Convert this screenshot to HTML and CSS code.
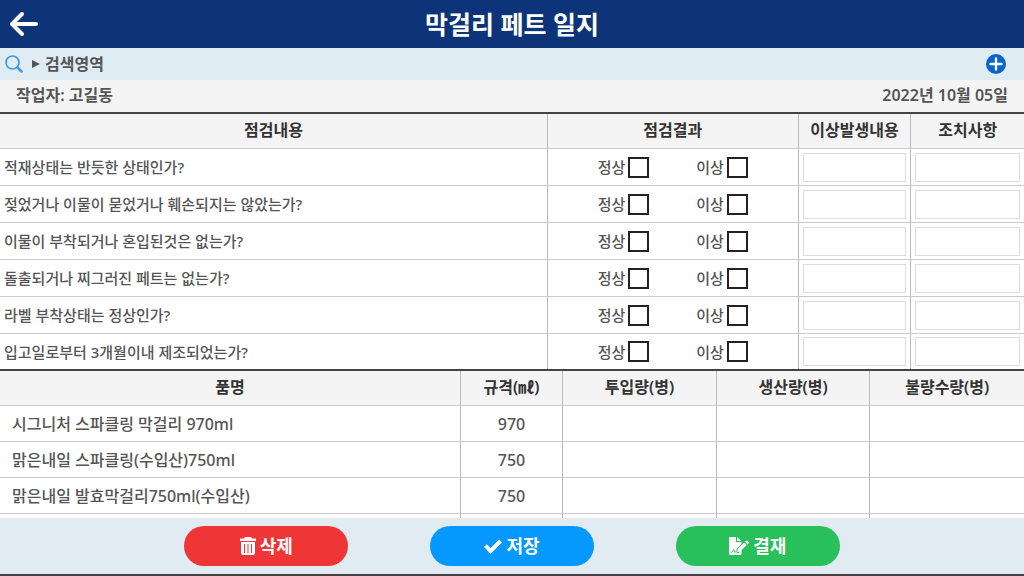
FILE: index.html
```html
<!DOCTYPE html>
<html lang="ko">
<head>
    <meta charset="UTF-8">
    <meta name="viewport" content="width=device-width, initial-scale=1.0">
    <title>막걸리 페트 일지</title>
    <link rel="stylesheet" href="styles.css">
</head>
<body>
    <header class="top-bar">
        <button type="button" class="back" aria-label="뒤로">
            <svg width="30" height="26" viewBox="0 0 30 26" fill="none" stroke="#fff" stroke-width="4" stroke-linecap="round" stroke-linejoin="round">
                <path d="M27 13H3M13 3L3 13l10 10"/>
            </svg>
        </button>
        <h1>막걸리 페트 일지</h1>
    </header>

    <div class="search-bar">
        <svg width="18" height="18" viewBox="0 0 18 18" fill="none" stroke="#3a9ee0">
            <circle cx="7.500" cy="7.500" r="6.500" stroke-width="1.700"/>
            <path d="M12.500 12.500l4 4" stroke-width="2.500" stroke-linecap="round"/>
        </svg>
        <span class="arrow"></span>
        <span>검색영역</span>
        <button type="button" class="add" aria-label="추가">
            <svg width="20" height="20" viewBox="0 0 20 20">
                <circle cx="10" cy="10" r="10" fill="#0864cf"/>
                <path d="M10 4.500v11M4.500 10h11" stroke="#fff" stroke-width="2.400" stroke-linecap="round"/>
            </svg>
        </button>
    </div>

    <div class="info">
        <span>작업자: 고길동</span>
        <span>2022년 10월 05일</span>
    </div>

    <main>
        <table class="check-table">
            <thead>
                <tr>
                    <th class="w-content">점검내용</th>
                    <th class="w-result">점검결과</th>
                    <th class="w-note">이상발생내용</th>
                    <th class="w-note">조치사항</th>
                </tr>
            </thead>
            <tbody>
                <tr>
                    <td>적재상태는 반듯한 상태인가?</td>
                    <td><div class="checks"><label>정상<input type="checkbox"></label><label>이상<input type="checkbox"></label></div></td>
                    <td class="note"><input type="text" aria-label="이상발생내용"></td>
                    <td class="note"><input type="text" aria-label="조치사항"></td>
                </tr>
                <tr>
                    <td>젖었거나 이물이 묻었거나 훼손되지는 않았는가?</td>
                    <td><div class="checks"><label>정상<input type="checkbox"></label><label>이상<input type="checkbox"></label></div></td>
                    <td class="note"><input type="text" aria-label="이상발생내용"></td>
                    <td class="note"><input type="text" aria-label="조치사항"></td>
                </tr>
                <tr>
                    <td>이물이 부착되거나 혼입된것은 없는가?</td>
                    <td><div class="checks"><label>정상<input type="checkbox"></label><label>이상<input type="checkbox"></label></div></td>
                    <td class="note"><input type="text" aria-label="이상발생내용"></td>
                    <td class="note"><input type="text" aria-label="조치사항"></td>
                </tr>
                <tr>
                    <td>돌출되거나 찌그러진 페트는 없는가?</td>
                    <td><div class="checks"><label>정상<input type="checkbox"></label><label>이상<input type="checkbox"></label></div></td>
                    <td class="note"><input type="text" aria-label="이상발생내용"></td>
                    <td class="note"><input type="text" aria-label="조치사항"></td>
                </tr>
                <tr>
                    <td>라벨 부착상태는 정상인가?</td>
                    <td><div class="checks"><label>정상<input type="checkbox"></label><label>이상<input type="checkbox"></label></div></td>
                    <td class="note"><input type="text" aria-label="이상발생내용"></td>
                    <td class="note"><input type="text" aria-label="조치사항"></td>
                </tr>
                <tr>
                    <td>입고일로부터 3개월이내 제조되었는가?</td>
                    <td><div class="checks"><label>정상<input type="checkbox"></label><label>이상<input type="checkbox"></label></div></td>
                    <td class="note"><input type="text" aria-label="이상발생내용"></td>
                    <td class="note"><input type="text" aria-label="조치사항"></td>
                </tr>
            </tbody>
        </table>

        <table class="item-table">
            <thead>
                <tr>
                    <th class="w-name">품명</th>
                    <th class="w-size">규격(㎖)</th>
                    <th>투입량(병)</th>
                    <th>생산량(병)</th>
                    <th>불량수량(병)</th>
                </tr>
            </thead>
            <tbody>
                <tr><td>시그니처 스파클링 막걸리 970ml</td><td>970</td><td></td><td></td><td></td></tr>
                <tr><td>맑은내일 스파클링(수입산)750ml</td><td>750</td><td></td><td></td><td></td></tr>
                <tr><td>맑은내일 발효막걸리750ml(수입산)</td><td>750</td><td></td><td></td><td></td></tr>
                <tr><td></td><td></td><td></td><td></td><td></td></tr>
            </tbody>
        </table>
    </main>

    <footer>
        <button type="button" class="btn delete">
            <svg width="16" height="18" viewBox="0 0 16 18" fill="#fff">
                <path d="M5 0h6l1 1.500h4V4H0V1.500h4z"/>
                <path fill-rule="evenodd" d="M1 5h14v11q0 2-2 2H3q-2 0-2-2zM4 7v9h1V7zM7.500 7v9h1V7zM11 7v9h1V7z"/>
            </svg>
            삭제
        </button>
        <button type="button" class="btn save">
            <svg width="18" height="18" viewBox="0 0 18 18" fill="none" stroke="#fff" stroke-width="4">
                <path d="M1.500 8.500l5 5.500L16.500 4"/>
            </svg>
            저장
        </button>
        <button type="button" class="btn approve">
            <svg width="20" height="18" viewBox="0 0 20 18">
                <path fill="#fff" d="M1 0h6v5h5.500v2L7.500 12v2.500H10l2.500-2V17q0 1-1 1H1q-1 0-1-1V1q0-1 1-1zM8 0l4.500 4H8z"/>
                <path fill="none" stroke="#27c05a" d="M2 15.500q1.500 0 2.500-3l1.500 3 1-1 1 1h2"/>
                <path fill="#fff" d="M8.500 12.300L15.300 5.500l2.500 2.500-6.800 6.500H8.500zM16 4.800l1-1q.7-.6 1.400 0l1.200 1.200q.6.700 0 1.400l-1 1z"/>
            </svg>
            결재
        </button>
    </footer>
</body>
</html>
```
FILE: styles.css
```css
* {
    box-sizing: border-box;
}
body {
    margin: 0;
    height: 100vh;
    display: flex;
    flex-direction: column;
    font-family: "Noto Sans", "Noto Sans CJK KR", sans-serif;
    font-size: 16px;
    font-weight: 500;
    line-height: 24px;
    color: #555;
    background-color: #fff;
}
button {
    padding: 0;
    border: none;
    background: none;
    font: inherit;
    cursor: pointer;
}
svg {
    display: block;
}
.top-bar {
    display: grid;
    grid-template-columns: 40px 1fr 40px;
    align-items: center;
    height: 48px;
    flex: none;
    background-color: #0d3478;
    color: #fff;
}
.back {
    padding-left: 9px;
}
h1 {
    margin: 0;
    font-size: 25px;
    font-weight: 600;
    line-height: 46px;
    text-align: center;
}
.search-bar {
    display: flex;
    align-items: center;
    height: 32px;
    flex: none;
    padding: 0 18px 0 5px;
    background-color: #e0ecf4;
    font-weight: 600;
}
.arrow {
    margin: 0 5px 0 9px;
    border-left: 8px solid #555;
    border-top: 4px solid transparent;
    border-bottom: 4px solid transparent;
}
.add {
    margin-left: auto;
}
.info {
    display: flex;
    justify-content: space-between;
    height: 32px;
    flex: none;
    padding: 3px 16px;
    background-color: #f4f4f4;
    font-weight: 600;
}
main {
    flex: 1;
    min-height: 0;
    overflow-y: auto;
    scrollbar-width: none;
}
table {
    width: 100%;
    table-layout: fixed;
    border-collapse: separate;
    border-spacing: 0;
    border-top: 2px solid #444;
}
th, td {
    padding: 0;
    border-right: 1px solid #bbb;
    border-bottom: 1px solid #ccc;
}
th:last-child, td:last-child {
    border-right: none;
}
th {
    height: 35px;
    padding-bottom: 2px;
    background-color: #f4f4f4;
    color: #333;
    font-weight: 600;
}
.w-content {
    width: 53.5%;
}
.w-result {
    width: 24.5%;
}
.w-note {
    width: 11%;
}
.w-name {
    width: 45%;
}
.w-size {
    width: 10%;
}
.check-table td {
    height: 37px;
    padding: 0 4px;
    font-size: 15px;
}
.check-table tr:last-child td {
    height: 35px;
    border-bottom: none;
}
.checks {
    display: flex;
    justify-content: center;
    gap: 47px;
}
.checks label {
    display: flex;
    align-items: center;
    gap: 3px;
}
.checks input {
    appearance: none;
    width: 21px;
    height: 21px;
    margin: 0;
    border: 2px solid #222;
    background-color: #fff;
}
.checks input:checked {
    background-color: #0864cf;
}
.note input {
    display: block;
    width: 100%;
    height: 29px;
    padding: 0 4px;
    border: 1px solid #ddd;
    font: inherit;
}
.item-table td {
    height: 36px;
    text-align: center;
}
.item-table td:first-child {
    padding-left: 12px;
    text-align: left;
}
footer {
    display: flex;
    justify-content: center;
    align-items: center;
    gap: 8%;
    height: 58px;
    flex: none;
    border-bottom: 2px solid #444;
    background-color: #e0ebf2;
}
.btn {
    display: flex;
    justify-content: center;
    align-items: center;
    gap: 4px;
    width: 16%;
    height: 40px;
    border-radius: 20px;
    color: #fff;
    font-size: 18px;
    font-weight: 600;
}
.delete {
    background-color: #ef3535;
}
.save {
    background-color: #0598ff;
}
.approve {
    background-color: #27c05a;
}
```
